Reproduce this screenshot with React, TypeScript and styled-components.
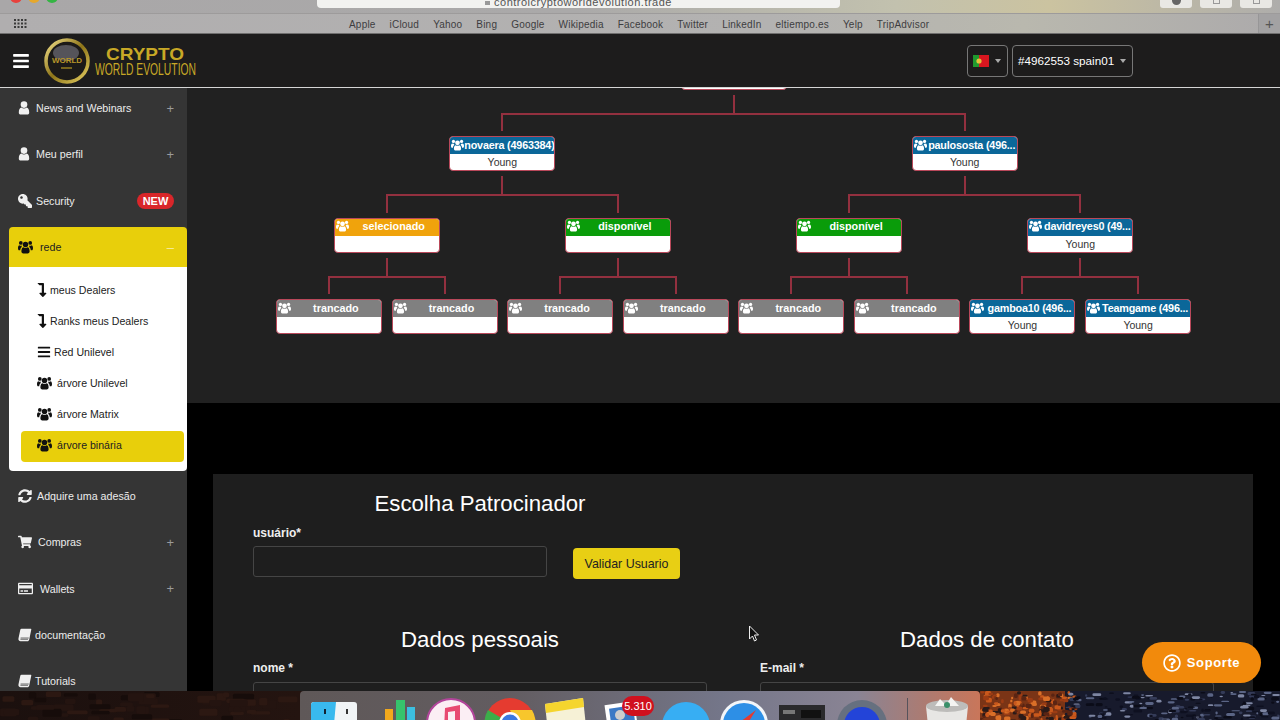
import React from "react";
import styled, { createGlobalStyle } from "styled-components";
import {
  FaBars, FaKey, FaLevelDownAlt, FaRegCreditCard, FaShoppingCart,
  FaSyncAlt, FaRegQuestionCircle,
} from "react-icons/fa";

const Global = createGlobalStyle`
  html, body { margin: 0; padding: 0; background: #000; }
  * { box-sizing: border-box; }
  body { font-family: "Liberation Sans", Arial, sans-serif; }
`;

const Screen = styled.div`
  position: relative;
  width: 1280px;
  height: 720px;
  overflow: hidden;
  display: flex;
  flex-direction: column;
`;

/* ---------- browser chrome ---------- */
const TopRow = styled.div`
  height: 14px;
  display: flex;
  overflow: hidden;
  padding-left: 10px;
  background: linear-gradient(90deg, #a9a7a8 0%, #aaa9a9 45%, #c2c1ae 70%, #cbc3a0 82%, #aeadab 100%);
  border-bottom: 1px solid #9d9b9b;
`;
const Light = styled.span<{ $c: string }>`
  width: 12px;
  height: 12px;
  margin: -9px 6px 0 0;
  border-radius: 50%;
  background: ${(p) => p.$c};
`;
const UrlBar = styled.div`
  width: 523px;
  height: 8px;
  margin-left: 253px;
  background: #f2f2f0;
  border-radius: 0 0 4px 4px;
  overflow: hidden;
  display: flex;
  justify-content: center;
  align-items: flex-end;
  gap: 4px;
  font-size: 11px;
  line-height: 11px;
  color: #555;
  letter-spacing: 0.5px;
`;
const UrlLock = styled.span`
  width: 5px;
  height: 4px;
  margin-bottom: 3px;
  background: #999;
`;
const ChromeButtons = styled.div`
  display: flex;
  gap: 8px;
  margin-left: 320px;
`;
const ChromeButton = styled.span`
  width: 32px;
  height: 8px;
  display: flex;
  justify-content: center;
  background: #e9e8e4;
  border-radius: 0 0 3px 3px;
`;
const ChromeGlyph = styled.span<{ $round?: boolean }>`
  width: ${(p) => (p.$round ? 9 : 7)}px;
  height: ${(p) => (p.$round ? 5 : 4)}px;
  background: ${(p) => (p.$round ? "#666" : "transparent")};
  border: ${(p) => (p.$round ? "0" : "1px solid #999")};
  border-top: 0;
  border-radius: ${(p) => (p.$round ? "0 0 5px 5px" : "0")};
`;
const Bookmarks = styled.div`
  height: 20px;
  display: flex;
  align-items: center;
  padding-left: 14px;
  background: linear-gradient(90deg, #b0aeaf 0%, #b3b2b1 60%, #b9b8ae 80%, #acaaab 100%);
  border-bottom: 1px solid #6f6e6e;
`;
const BookmarkList = styled.div`
  display: flex;
  gap: 14px;
  margin: 1px 0 0 321px;
  font-size: 10px;
  letter-spacing: 0.2px;
  color: #3d3d3f;
`;
const NewTab = styled.div`
  margin-left: auto;
  width: 22px;
  height: 100%;
  display: flex;
  align-items: center;
  justify-content: center;
  background: #a3a2a3;
  border-left: 1px solid #979697;
  color: #555;
  font-size: 15px;
  font-weight: 300;
`;

/* ---------- site header ---------- */
const Header = styled.header`
  height: 54px;
  flex: none;
  display: flex;
  align-items: center;
  background: #1d1c1c;
  border-bottom: 1px solid #d5d5d5;
  padding-left: 13px;
  color: #fff;
`;
const Burger = styled(FaBars)`
  width: 16px;
  height: 18px;
  color: #fff;
`;
const HeaderRight = styled.div`
  margin-left: auto;
  margin-right: 147px;
  display: flex;
  gap: 4px;
`;
const Pick = styled.div<{ $w: number }>`
  width: ${(p) => p.$w}px;
  height: 32px;
  display: flex;
  align-items: center;
  padding: 0 5px;
  border: 1px solid #777;
  border-radius: 4px;
  font-size: 11.7px;
  color: #fff;
`;
const Caret = styled.span`
  margin-left: auto;
  margin-right: 1px;
  border-left: 3.5px solid transparent;
  border-right: 3.5px solid transparent;
  border-top: 4px solid #aaa;
`;

/* ---------- body / sidebar ---------- */
const Body = styled.div`
  flex: 1;
  min-height: 0;
  display: flex;
`;
const Sidebar = styled.nav`
  width: 187px;
  flex: none;
  background: #353535;
  overflow: hidden;
`;
const NavList = styled.div`
  margin-top: -3px;
  display: flex;
  flex-direction: column;
`;
const NavItem = styled.div<{ $gap: number; $wide?: boolean }>`
  height: 46.3px;
  flex: none;
  display: flex;
  align-items: center;
  padding: 0 13px 0 18px;
  font-size: 10.7px;
  color: #ececec;
  svg {
    flex: none;
    width: ${(p) => (p.$wide ? 15 : 14)}px;
    height: ${(p) => (p.$wide ? 15 : 14)}px;
    margin-right: ${(p) => p.$gap}px;
    color: #f0f0f0;
  }
`;
const KeyIcon = styled(FaKey)`
  transform: scaleX(-1);
`;
const Expand = styled.span`
  margin-left: auto;
  color: #9a9a9a;
  font-size: 13px;
`;
const NewBadge = styled.span`
  margin-left: auto;
  width: 37px;
  height: 16px;
  border-radius: 8px;
  background: #d9262a;
  color: #fff;
  font-size: 11px;
  font-weight: 700;
  display: flex;
  align-items: center;
  justify-content: center;
`;
const Group = styled.div`
  margin: 3.5px 0 2px 9px;
`;
const GroupHead = styled.div`
  height: 40px;
  display: flex;
  align-items: center;
  padding: 0 13px 0 9px;
  background: #e8cf0b;
  border-radius: 4px 4px 0 0;
  font-size: 10.7px;
  color: #222;
  svg { width: 15px; height: 14px; margin-right: 7px; color: #111; }
`;
const Minus = styled.span`
  margin-left: auto;
  color: #f5eda0;
  font-size: 13px;
`;
const SubPanel = styled.div`
  background: #fff;
  border-radius: 0 0 4px 4px;
  padding: 8.5px 3px 9px 12px;
`;
const SubItem = styled.div<{ $active?: boolean; $gap: number }>`
  height: 31px;
  display: flex;
  align-items: center;
  padding: 0 0 2px 16px;
  font-size: 10.6px;
  color: #222;
  border-radius: 4px;
  background: ${(p) => (p.$active ? "#e8cf0b" : "transparent")};
  svg { flex: none; margin-right: ${(p) => p.$gap}px; color: #111; width: 15px; height: 14px; }
`;
const LevelIcon = styled(FaLevelDownAlt)`
  margin-left: -2px;
  width: 14px !important;
`;
const BarsIcon = styled(FaBars)`
  width: 14px !important;
`;

/* ---------- main ---------- */
const Main = styled.main`
  flex: 1;
  min-width: 0;
  background: #000;
  display: flex;
  flex-direction: column;
`;
const TreePanel = styled.section`
  height: 315px;
  flex: none;
  background: #212121;
  overflow: hidden;
  display: flex;
  justify-content: center;
`;
const TreeRoot = styled.div`
  margin-top: -33.5px;
`;
const NodeWrap = styled.div`
  display: flex;
  flex-direction: column;
  align-items: center;
`;
const Box = styled.div`
  width: 106px;
  height: 35px;
  flex: none;
  border: 1px solid #b9485a;
  border-radius: 4px;
  background: #fff;
  overflow: hidden;
`;
const tones: Record<string, string> = {
  blue: "#0b6799", orange: "#f0a30c", green: "#0a9c0a", gray: "#808080",
};
const BoxHead = styled.div<{ $tone: string }>`
  height: 17px;
  display: flex;
  align-items: center;
  padding: 0 0 2px 1px;
  background: ${(p) => tones[p.$tone]};
  color: #fff;
  font-size: 10.8px;
  letter-spacing: ${(p) => (p.$tone === "blue" ? "-0.2px" : "0")};
  font-weight: 700;
  white-space: nowrap;
  svg { flex: none; width: 13px; height: 12px; }
`;
const BoxName = styled.span`
  flex: 1;
  min-width: 0;
  text-align: center;
`;
const BoxBody = styled.div`
  height: 16px;
  text-align: center;
  font-size: 10.5px;
  line-height: 17px;
  color: #333;
`;
const Stem = styled.div`
  width: 2px;
  height: 18px;
  margin-top: 5px;
  background: #93303f;
`;
const Kids = styled.div`
  display: flex;
`;
const Kid = styled.div<{ $side: "l" | "r" }>`
  position: relative;
  padding-top: 23.5px;
  &::before {
    content: "";
    position: absolute;
    top: 0;
    height: 2px;
    width: calc(50% + 1px);
    background: #93303f;
    ${(p) => (p.$side === "r" ? "right: 0;" : "left: 0;")}
  }
  &::after {
    content: "";
    position: absolute;
    top: 0;
    left: calc(50% - 1px);
    width: 2px;
    height: 18.5px;
    background: #93303f;
  }
`;
const Leaf = styled.div`
  width: 115.6px;
  display: flex;
  justify-content: center;
`;

const Card = styled.section`
  flex: 1;
  min-height: 0;
  margin: 71px 27px 0 26px;
  padding: 0 40px;
  background: #1e1e1e;
  overflow: hidden;
  color: #fff;
`;
const Columns = styled.div`
  display: grid;
  grid-template-columns: 454px 454px;
  column-gap: 53px;
`;
const Title = styled.h2`
  margin: 0;
  font-size: 22.2px;
  line-height: 26px;
  font-weight: 400;
  text-align: center;
`;
const SponsorTitle = styled(Title)`
  padding-top: 17px;
  width: 454px;
`;
const Label = styled.label`
  display: block;
  font-size: 12px;
  line-height: 14px;
  font-weight: 700;
  color: #eee;
`;
const SponsorLabel = styled(Label)`
  margin-top: 9px;
`;
const SponsorRow = styled.div`
  display: flex;
  align-items: flex-start;
  margin-top: 6px;
`;
const Field = styled.div<{ $w?: number }>`
  width: ${(p) => (p.$w ? `${p.$w}px` : "100%")};
  height: 31px;
  border: 1px solid #454545;
  border-radius: 3px;
  background: #1e1e1e;
`;
const Validate = styled.button`
  width: 107px;
  height: 31px;
  margin: 2px 0 0 26px;
  padding: 0;
  border: 0;
  border-radius: 4px;
  background: #e8cf14;
  color: #222;
  font: 12.4px "Liberation Sans", Arial, sans-serif;
`;
const SectionTitle = styled(Title)`
  margin-top: 48px;
`;
const SectionLabel = styled(Label)`
  margin-top: 8px;
  margin-bottom: 7px;
`;

const Soporte = styled.button`
  position: absolute;
  left: 1142px;
  top: 642px;
  width: 119px;
  height: 41px;
  border: 0;
  border-radius: 21px;
  background: #f28a0c;
  color: #fff;
  font: 700 13px "Liberation Sans", Arial, sans-serif;
  letter-spacing: 0.6px;
  display: flex;
  align-items: center;
  justify-content: center;
  gap: 6px;
  svg { font-size: 18px; }
`;
const Pointer = styled.svg`
  position: absolute;
  left: 748px;
  top: 625px;
`;

/* ---------- desktop + dock ---------- */
const Desk = styled.div`
  position: relative;
  height: 29px;
  flex: none;
  display: flex;
  padding-left: 300px;
  background: linear-gradient(90deg, #1b100e 0, #241410 300px);
`;
const Wallpaper = styled.svg`
  position: absolute;
  left: 0;
  top: 0;
`;
const Dock = styled.div`
  position: relative;
  width: 680px;
  height: 29px;
  overflow: hidden;
  display: flex;
  padding: 7px 0 0 4px;
  border-radius: 4px 4px 0 0;
  background: linear-gradient(90deg, #5f5858 0%, #625c60 30%, #747689 62%, #8a8494 82%, #b07a6e 93%, #c9765a 100%);
`;
const DockSlot = styled.svg`
  flex: none;
  width: 58.5px;
  height: 48px;
`;
const DockBadge = styled.span`
  position: absolute;
  left: 322px;
  top: 5px;
  width: 32px;
  height: 20px;
  border-radius: 10px;
  background: #d0101e;
  color: #fff;
  font-size: 11px;
  line-height: 20px;
  text-align: center;
`;
const DockLine = styled.span`
  flex: none;
  width: 1px;
  height: 22px;
  margin: 0 17px 0 18px;
  background: #56535c;
`;
const DockTrash = styled.svg`
  flex: none;
  width: 44px;
  height: 48px;
  margin-top: -1px;
`;

/* FontAwesome 4 style glyphs the packages only have in a later, different drawing */
const UsersIcon = () => (
  <svg viewBox="0 0 16 14" fill="currentColor">
    <circle cx="8" cy="4.3" r="2.9" />
    <path d="M3.6 11.6c0-2.7 1-4.4 2.2-4.4.6.5 1.3.8 2.2.8s1.6-.3 2.2-.8c1.2 0 2.2 1.7 2.2 4.4 0 1.4-.9 2.2-2 2.2H5.6c-1.1 0-2-.8-2-2.2z" />
    <circle cx="3" cy="2.6" r="2" /><circle cx="13" cy="2.6" r="2" />
    <path d="M0 8c0-1.8.7-3 1.5-3 .5.4 1 .6 1.6.6.3 0 .5 0 .7-.1-.1.6.1 1.2.3 1.6-1 .5-1.6 1.700-1.700 3.400H1.300C.5 10.500 0 9.800 0 8zM16 8c0-1.800-.7-3-1.500-3-.5.400-1 .600-1.600.600-.300 0-.500 0-.700-.100.1.600-.1 1.200-.300 1.600 1 .500 1.600 1.700 1.700 3.400h1.100c.8 0 1.300-.7 1.300-2.500z" />
  </svg>
);
const UserIcon = () => (
  <svg viewBox="0 0 14 14" fill="currentColor">
    <circle cx="6" cy="3.6" r="3.3" />
    <path d="M.8 11.4c0-3 1-4.700 2.600-4.900.7.6 1.600.9 2.600.9s1.900-.3 2.600-.9c1.600.2 2.600 1.900 2.600 4.900 0 1.300-.8 2.100-1.900 2.100H2.700C1.600 13.500.8 12.700.8 11.400z" />
  </svg>
);
const BookIcon = () => (
  <svg viewBox="0 0 14 14" fill="currentColor">
    <path d="M3.500.8h9.300c.4 0 .6.300.5.700l-2.100 10.200c-.2.900-.9 1.500-1.800 1.500H2.600C1 13.200.1 12 .5 10.300L2.300 1.700C2.400 1.200 2.900.8 3.500.8z" />
    <path d="M2.600 10h8.200M2.400 11.300h7.600" stroke="#353535" strokeWidth=".7" fill="none" />
  </svg>
);

/* A fixed, seeded scatter of foliage and snow patches. */
const patches = (() => {
  let s = 7;
  const r = () => { s = (s * 16807) % 2147483647; return s / 2147483647; };
  const out: { x: number; y: number; w: number; h: number; c: string }[] = [];
  for (let i = 0; i < 170; i++) {
    out.push({ x: 980 + r() * 95, y: r() * 29, w: 2 + r() * 5, h: 2 + r() * 3, c: ["#c9581c", "#9c3c14", "#d96f28", "#5a2413", "#2a1a18"][Math.floor(r() * 5)] });
  }
  for (let i = 0; i < 180; i++) {
    out.push({ x: 1065 + r() * 215, y: r() * 29, w: 2 + r() * 7, h: 1 + r() * 2.5, c: ["#5a6484", "#7e86a2", "#343b58", "#0e1020", "#0b0c18"][Math.floor(r() * 5)] });
  }
  for (let i = 0; i < 60; i++) {
    out.push({ x: r() * 300, y: r() * 29, w: 6 + r() * 16, h: 3 + r() * 5, c: ["#2c1812", "#160c0a", "#241410"][Math.floor(r() * 3)] });
  }
  return out;
})();

type N = { name?: string; tone: string; rank?: string; kids?: N[] };
const L = (tone: string, name: string, rank = ""): N => ({ tone, name, rank });
const tr = () => L("gray", "trancado");
const tree: N = {
  tone: "blue", name: "", kids: [
    { tone: "blue", name: "novaera (4963384)", rank: "Young", kids: [
      { ...L("orange", "selecionado"), kids: [tr(), tr()] },
      { ...L("green", "disponível"), kids: [tr(), tr()] },
    ]},
    { tone: "blue", name: "paulososta (496...", rank: "Young", kids: [
      { ...L("green", "disponível"), kids: [tr(), tr()] },
      { tone: "blue", name: "davidreyes0 (49...", rank: "Young", kids: [
        L("blue", "gamboa10 (496...", "Young"),
        L("blue", "Teamgame (496...", "Young"),
      ]},
    ]},
  ],
};

function NodeBox({ n }: { n: N }) {
  return (
    <Box>
      <BoxHead $tone={n.tone}><UsersIcon /><BoxName>{n.name}</BoxName></BoxHead>
      <BoxBody>{n.rank}</BoxBody>
    </Box>
  );
}

function TreeNode({ n }: { n: N }) {
  return (
    <NodeWrap>
      {n.kids ? <NodeBox n={n} /> : <Leaf><NodeBox n={n} /></Leaf>}
      {n.kids && <Stem />}
      {n.kids && (
        <Kids>
          {n.kids.map((k, i) => (
            <Kid key={i} $side={i === 0 ? "r" : "l"}><TreeNode n={k} /></Kid>
          ))}
        </Kids>
      )}
    </NodeWrap>
  );
}

const bookmarks = ["Apple", "iCloud", "Yahoo", "Bing", "Google", "Wikipedia", "Facebook", "Twitter", "LinkedIn", "eltiempo.es", "Yelp", "TripAdvisor"];

function Logo() {
  return (
    <svg width="156" height="46" viewBox="0 0 156 46" style={{ marginLeft: 15 }}>
      <defs>
        <linearGradient id="ring" x1="0" y1="0" x2="1" y2="1">
          <stop offset="0" stopColor="#f2e08a" />
          <stop offset="0.5" stopColor="#8d7418" />
          <stop offset="1" stopColor="#e6cf62" />
        </linearGradient>
      </defs>
      <circle cx="23" cy="23" r="21" fill="#1c1a18" stroke="url(#ring)" strokeWidth="3.5" />
      <ellipse cx="22" cy="15" rx="13" ry="8" fill="#55545a" />
      <text x="23" y="25" textAnchor="middle" fontFamily="Liberation Sans, Arial, sans-serif" fontSize="8" fontWeight="700" fill="#b8962a">WORLD</text>
      <rect x="17" y="29" width="11" height="2" fill="#77651d" />
      <text x="62" y="22" textLength="78" lengthAdjust="spacingAndGlyphs" fontFamily="Liberation Sans, Arial, sans-serif" fontSize="17" fontWeight="700" fill="#c8a826">CRYPTO</text>
      <text x="51" y="37" textLength="101" lengthAdjust="spacingAndGlyphs" fontFamily="Liberation Sans, Arial, sans-serif" fontSize="16" fill="#c8a826">WORLD EVOLUTION</text>
    </svg>
  );
}

function Flag() {
  return (
    <svg width="16" height="12" viewBox="0 0 16 12">
      <rect width="6" height="12" fill="#1f9a2e" />
      <rect x="6" width="10" height="12" fill="#d8161f" />
      <circle cx="6" cy="6" r="2.6" fill="#e2c23a" />
    </svg>
  );
}

function AppsGrid() {
  const dots = [];
  for (let y = 0; y < 3; y++) for (let x = 0; x < 4; x++) dots.push(<rect key={`${x}-${y}`} x={x * 3.5} y={y * 3.5} width="2" height="2" fill="#3a3a3a" />);
  return <svg width="14" height="10" viewBox="0 0 14 10">{dots}</svg>;
}

export default function App() {
  return (
    <Screen>
      <Global />
      <TopRow>
        <Light $c="#e8413c" /><Light $c="#e6a82c" /><Light $c="#35b544" />
        <UrlBar><UrlLock />controlcryptoworldevolution.trade</UrlBar>
        <ChromeButtons>
          <ChromeButton><ChromeGlyph $round /></ChromeButton>
          <ChromeButton><ChromeGlyph /></ChromeButton>
          <ChromeButton><ChromeGlyph /></ChromeButton>
        </ChromeButtons>
      </TopRow>
      <Bookmarks>
        <AppsGrid />
        <BookmarkList>{bookmarks.map((b) => <span key={b}>{b}</span>)}</BookmarkList>
        <NewTab>+</NewTab>
      </Bookmarks>
      <Header>
        <Burger />
        <Logo />
        <HeaderRight>
          <Pick $w={41}><Flag /><Caret /></Pick>
          <Pick $w={121}>#4962553 spain01<Caret /></Pick>
        </HeaderRight>
      </Header>
      <Body>
        <Sidebar>
          <NavList>
            <NavItem $gap={4}><UserIcon />News and Webinars<Expand>+</Expand></NavItem>
            <NavItem $gap={4}><UserIcon />Meu perfil<Expand>+</Expand></NavItem>
            <NavItem $gap={4}><KeyIcon />Security<NewBadge>NEW</NewBadge></NavItem>
            <Group>
              <GroupHead><UsersIcon />rede<Minus>–</Minus></GroupHead>
              <SubPanel>
                <SubItem $gap={1}><LevelIcon />meus Dealers</SubItem>
                <SubItem $gap={1}><LevelIcon />Ranks meus Dealers</SubItem>
                <SubItem $gap={3}><BarsIcon />Red Unilevel</SubItem>
                <SubItem $gap={5}><UsersIcon />árvore Unilevel</SubItem>
                <SubItem $gap={5}><UsersIcon />árvore Matrix</SubItem>
                <SubItem $gap={5} $active><UsersIcon />árvore binária</SubItem>
              </SubPanel>
            </Group>
            <NavItem $gap={5}><FaSyncAlt />Adquire uma adesão</NavItem>
            <NavItem $gap={6}><FaShoppingCart />Compras<Expand>+</Expand></NavItem>
            <NavItem $gap={7} $wide><FaRegCreditCard />Wallets<Expand>+</Expand></NavItem>
            <NavItem $gap={3}><BookIcon />documentação</NavItem>
            <NavItem $gap={3}><BookIcon />Tutorials</NavItem>
          </NavList>
        </Sidebar>
        <Main>
          <TreePanel>
            <TreeRoot><TreeNode n={tree} /></TreeRoot>
          </TreePanel>
          <Card>
            <SponsorTitle>Escolha Patrocinador</SponsorTitle>
            <SponsorLabel>usuário*</SponsorLabel>
            <SponsorRow>
              <Field $w={294} />
              <Validate>Validar Usuario</Validate>
            </SponsorRow>
            <Columns>
              <div>
                <SectionTitle>Dados pessoais</SectionTitle>
                <SectionLabel>nome *</SectionLabel>
                <Field />
              </div>
              <div>
                <SectionTitle>Dados de contato</SectionTitle>
                <SectionLabel>E-mail *</SectionLabel>
                <Field />
              </div>
            </Columns>
          </Card>
        </Main>
      </Body>
      <Desk>
        <Wallpaper width="1280" height="29" viewBox="0 0 1280 29">
          <rect x="980" width="100" height="29" fill="#7a3416" />
          <rect x="1065" width="215" height="29" fill="#171a2c" />
          {patches.map((p, i) => <rect key={i} x={p.x} y={p.y} width={p.w} height={p.h} rx="1.5" fill={p.c} />)}
        </Wallpaper>
        <Dock>
          <DockSlot viewBox="0 0 58.5 48">
            <rect x="7" y="4" width="46" height="44" rx="3" fill="#f1f4f6" />
            <path d="M10 4h22l-4 44H10a3 3 0 0 1-3-3V7a3 3 0 0 1 3-3z" fill="#39b9ee" />
            <rect x="20" y="11" width="2" height="5" fill="#123" /><rect x="42" y="11" width="2" height="5" fill="#333" />
          </DockSlot>
          <DockSlot viewBox="0 0 58.5 48">
            <rect x="22" y="11" width="8" height="30" fill="#f2a81c" />
            <rect x="33" y="2" width="9" height="40" fill="#36c46c" />
            <rect x="44" y="9" width="8" height="32" fill="#3cbfe0" />
          </DockSlot>
          <DockSlot viewBox="0 0 58.5 48">
            <circle cx="30" cy="25" r="24" fill="#fbeef4" stroke="#b2459b" strokeWidth="2" />
            <path d="M24 10l15-3v22h-5V13l-7 1v18h-4z" fill="#e84a72" />
          </DockSlot>
          <DockSlot viewBox="0 0 58.5 48">
            <circle cx="30" cy="25" r="25" fill="#e53b30" />
            <path d="M30 25L8 12A25 25 0 0 0 18 47z" fill="#3cae4a" />
            <path d="M30 12h22a25 25 0 0 1-8 34z" fill="#f7c62c" />
            <circle cx="30" cy="25" r="11" fill="#fff" /><circle cx="30" cy="25" r="8.5" fill="#3c78e0" />
          </DockSlot>
          <DockSlot viewBox="0 0 58.5 48">
            <path d="M7 6L45 0l4 38-38 6z" fill="#f6f1d6" />
            <path d="M7 6L45 0l1 9-38 6z" fill="#f5d52e" />
          </DockSlot>
          <DockSlot viewBox="0 0 58.5 48">
            <rect x="10" y="5" width="30" height="38" fill="#fff" transform="rotate(-8 25 24)" />
            <rect x="14" y="9" width="24" height="30" fill="#3b79c5" transform="rotate(-8 25 24)" />
            <circle cx="23" cy="17" r="5" fill="#ccc" />
          </DockSlot>
          <DockSlot viewBox="0 0 58.5 48">
            <circle cx="31" cy="28" r="24" fill="#37aef3" />
          </DockSlot>
          <DockSlot viewBox="0 0 58.5 48">
            <circle cx="30" cy="26" r="24" fill="#f3f6f9" />
            <circle cx="30" cy="26" r="21" fill="#2d8fe6" />
            <path d="M42 12L26 24l6 4z" fill="#e23b32" /><path d="M26 24l-8 16 14-12z" fill="#fff" />
          </DockSlot>
          <DockSlot viewBox="0 0 58.5 48">
            <rect x="7" y="7" width="46" height="41" fill="#2a2a2c" />
            <rect x="11" y="12" width="12" height="4" fill="#777" /><rect x="29" y="12" width="20" height="8" fill="#111" />
          </DockSlot>
          <DockSlot viewBox="0 0 58.5 48">
            <circle cx="31" cy="27" r="25" fill="#66707f" />
            <circle cx="31" cy="27" r="18" fill="#2344d8" />
          </DockSlot>
          <DockLine />
          <DockTrash viewBox="0 0 44 48">
            <path d="M1 9h42l-4 39H5z" fill="#e7e6e4" />
            <ellipse cx="22" cy="9" rx="21" ry="6" fill="#bdbcba" />
            <path d="M10 9l5-7 6 6 5-8 8 9z" fill="#f4f4f2" />
            <circle cx="22" cy="8" r="3" fill="#3a8f6a" />
          </DockTrash>
          <DockBadge>5.310</DockBadge>
        </Dock>
      </Desk>
      <Soporte><FaRegQuestionCircle />Soporte</Soporte>
      <Pointer width="12" height="18" viewBox="0 0 12 18">
        <path d="M1.5 1v13l3-3 2 5 2-1-2-5h4z" fill="#111" stroke="#eee" strokeWidth="1" />
      </Pointer>
    </Screen>
  );
}
